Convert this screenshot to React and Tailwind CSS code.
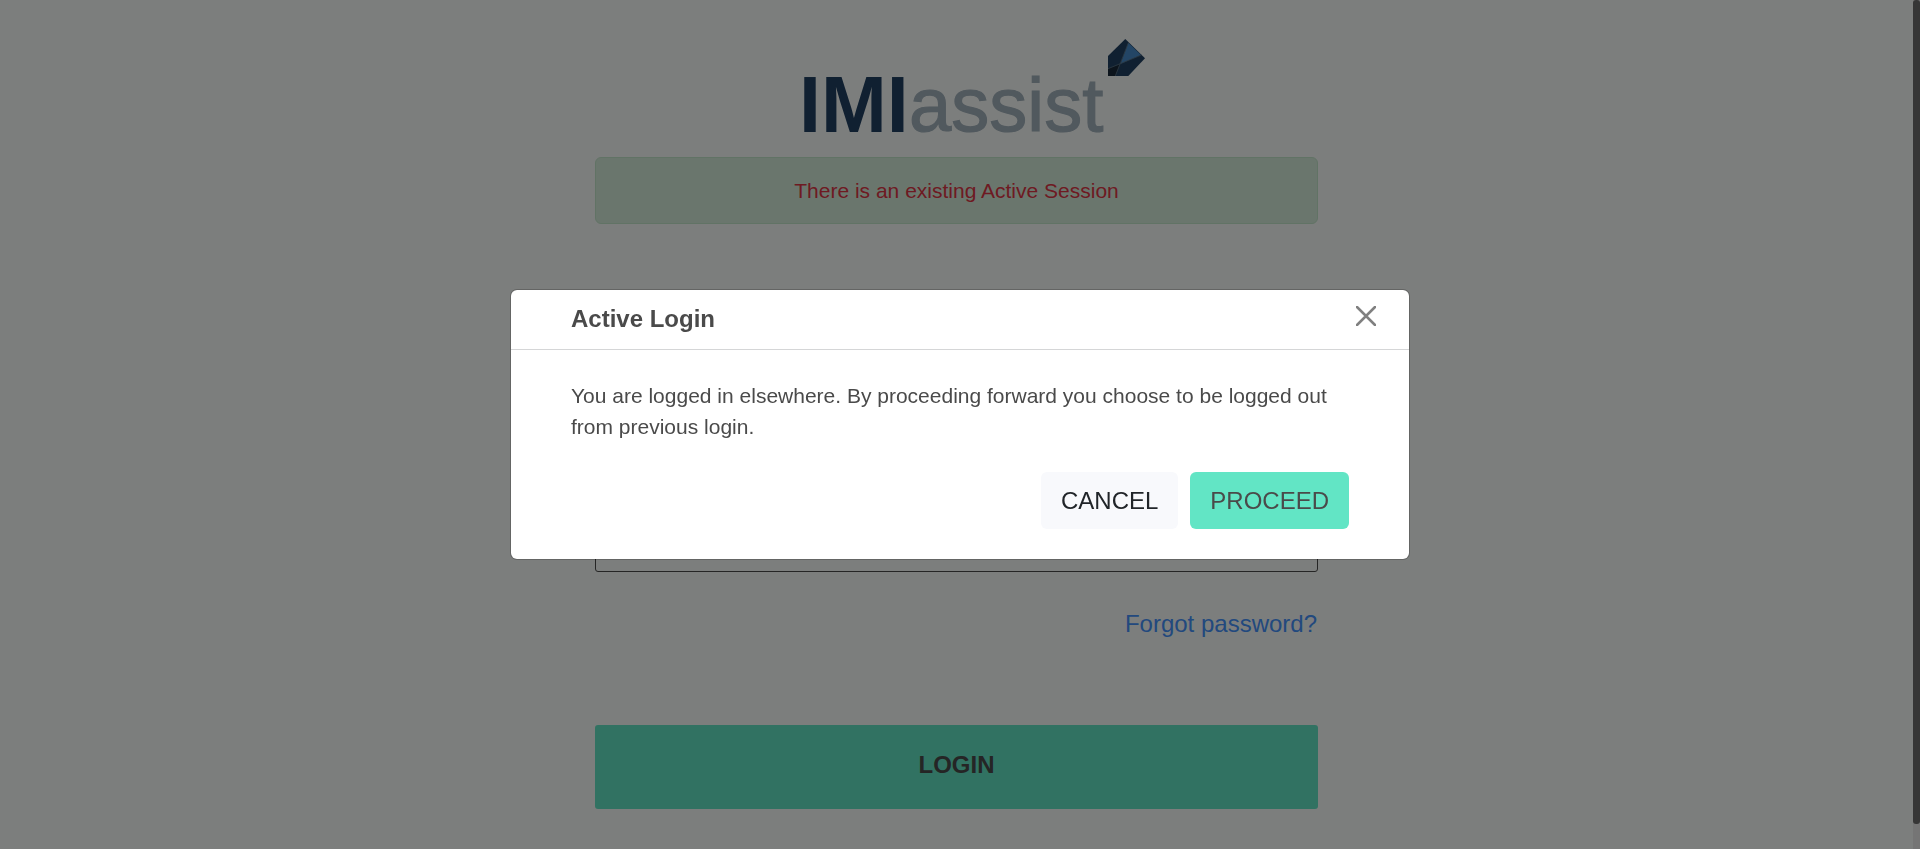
import React from "react";

function Logo() {
  return (
    <svg
      viewBox="0 0 381 125"
      role="img"
      aria-label="IMIassist"
      className="mx-auto h-[125px] w-[381px] max-w-full overflow-visible font-['Liberation_Sans',Arial,sans-serif]"
    >
      <text x="33" y="99.7" fontSize="79" fontWeight="700" fill="#204162">
        IMI
      </text>
      <text x="143" y="99.3" fontSize="76" fill="#a2b2bc" stroke="#a2b2bc" strokeWidth="1.2">
        assist
      </text>
      <path d="M342 24 359.3 7 379 26.3 362.3 44 342 44Z" fill="#204162" />
      <path d="M362.3 10.7 375 23 354.3 32Z" fill="#468bca" />
      <path d="M342 36.7 353.6 32.5 349.3 44H342Z" fill="#182838" />
      <path d="M342 36.7 375.5 23M362.5 10.5 349.3 44" fill="none" stroke="#5b7183" strokeWidth="0.8" />
    </svg>
  );
}

function Field({ label, type, autoComplete }) {
  return (
    <input
      aria-label={label}
      type={type}
      autoComplete={autoComplete}
      className="block h-[84px] w-full rounded-[3px] border border-[#4a4a4a] px-5 text-2xl"
    />
  );
}

function LoginPage() {
  return (
    <main className="flex-1 px-4 pt-8 pb-9">
      <div className="mx-auto flex w-full max-w-[723px] flex-col">
        <Logo />
        <p
          role="alert"
          className="rounded-md border border-[#c3e6cb] bg-[#d4edda] px-5 py-[17px] text-center text-[21px] leading-[31px] text-[#dc3545]"
        >
          There is an existing Active Session
        </p>
        <form className="mt-[150px] flex flex-col" onSubmit={(e) => e.preventDefault()}>
          <div className="flex flex-col gap-[30px]">
            <Field label="Username" type="text" autoComplete="username" />
            <Field label="Password" type="password" autoComplete="current-password" />
          </div>
          <a href="#forgot" className="mt-[34px] self-end pr-px text-2xl leading-9 text-[#4492fc]">
            Forgot password?
          </a>
          <button
            type="submit"
            className="mt-[83px] rounded-[3px] bg-[#62e5c5] pt-[22px] pb-[26px] text-2xl leading-9 font-bold text-[#4a4a4a]"
          >
            LOGIN
          </button>
        </form>
      </div>
    </main>
  );
}

function ActiveLoginDialog() {
  return (
    <div className="fixed inset-0 flex items-center justify-center bg-black/50">
      <section
        role="dialog"
        aria-modal="true"
        aria-labelledby="dialog-title"
        className="w-full max-w-[900px] rounded-[7px] border border-black/20 bg-white bg-clip-padding text-[#4a4a4a]"
      >
        <header className="flex items-start justify-between border-b border-[#d5d6d7] pt-[11px] pr-7 pb-3 pl-[60px]">
          <h2 id="dialog-title" className="text-2xl leading-9 font-bold">
            Active Login
          </h2>
          <button type="button" aria-label="Close" className="p-[5px]">
            <svg viewBox="0 0 20 20" className="size-5" fill="none" stroke="#808080" strokeWidth="2.5" strokeLinecap="round">
              <path d="M1 1 19 19M19 1 1 19" />
            </svg>
          </button>
        </header>
        <div className="px-[60px] py-[30px]">
          <p className="text-[21px] leading-[31px]">
            You are logged in elsewhere. By proceeding forward you choose to be logged out from previous login.
          </p>
          <div className="mt-[30px] flex justify-end gap-3 text-2xl">
            <button type="button" className="h-[57px] rounded-md bg-[#f8f9fc] px-5 text-[#212529]">
              CANCEL
            </button>
            <button type="button" className="h-[57px] rounded-md bg-[#62e5c5] px-5 text-[#4a4a4a]">
              PROCEED
            </button>
          </div>
        </div>
      </section>
    </div>
  );
}

export default function App() {
  return (
    <div className="flex min-h-screen bg-[#f9fcfa] font-['Liberation_Sans',Arial,sans-serif]">
      <LoginPage />
      <div aria-hidden="true" className="w-[7px] bg-[#ebebeb]">
        <div className="h-[97vh] rounded-[3px] bg-[#6c6c6c]" />
      </div>
      <ActiveLoginDialog />
    </div>
  );
}
